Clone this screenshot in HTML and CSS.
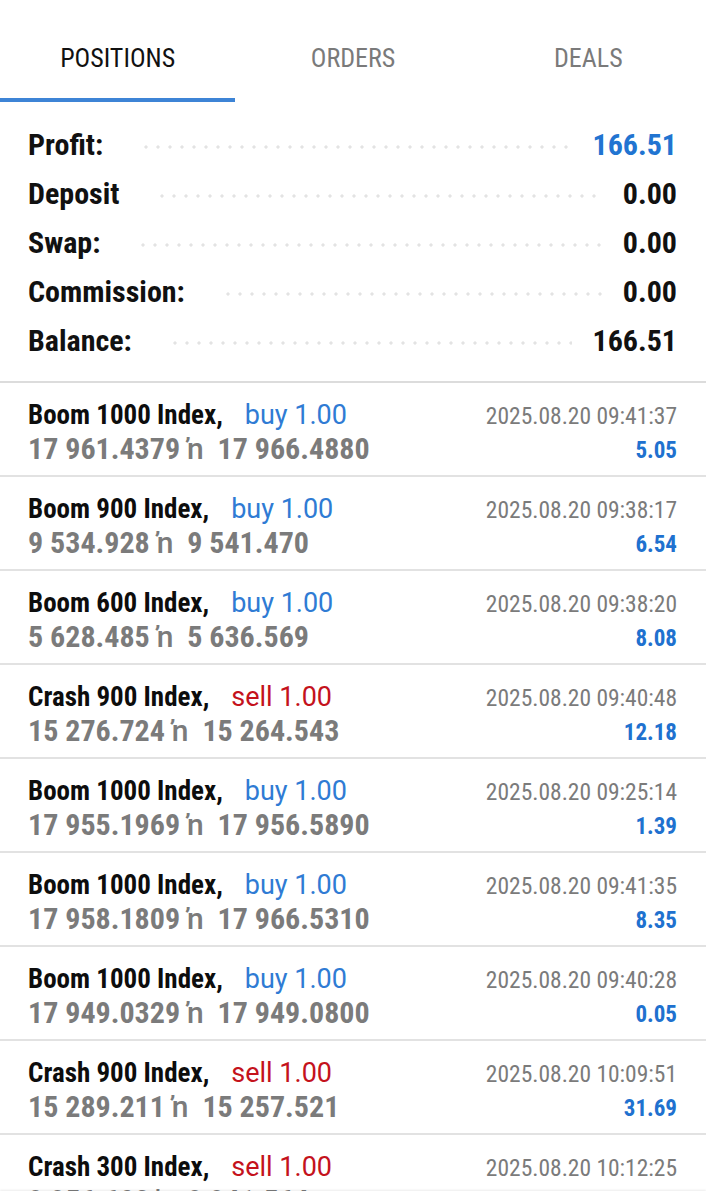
FILE: index.html
```html
<!DOCTYPE html>
<html lang="en">
<head>
<meta charset="utf-8">
<title>Trade</title>
<link rel="stylesheet" href="styles.css">
</head>
<body>
<div class="app">
  <nav class="tabs">
    <div class="tab active">POSITIONS</div>
    <div class="tab">ORDERS</div>
    <div class="tab">DEALS</div>
  </nav>

  <section class="summary">
    <div class="sum-row"><span class="label">Profit:</span><span class="dots"></span><span class="value blue">166.51</span></div>
    <div class="sum-row"><span class="label">Deposit</span><span class="dots"></span><span class="value">0.00</span></div>
    <div class="sum-row"><span class="label">Swap:</span><span class="dots"></span><span class="value">0.00</span></div>
    <div class="sum-row"><span class="label">Commission:</span><span class="dots"></span><span class="value">0.00</span></div>
    <div class="sum-row"><span class="label">Balance:</span><span class="dots"></span><span class="value">166.51</span></div>
  </section>

  <ul class="positions">
    <li class="pos">
      <div class="left"><div class="title">Boom 1000 Index,<span class="buy">buy 1.00</span></div><div class="prices">17 961.4379 <span class="arr">ŉ</span>&nbsp; 17 966.4880</div></div>
      <div class="right"><div class="time">2025.08.20 09:41:37</div><div class="pl">5.05</div></div>
    </li>
    <li class="pos">
      <div class="left"><div class="title">Boom 900 Index,<span class="buy">buy 1.00</span></div><div class="prices">9 534.928 <span class="arr">ŉ</span>&nbsp; 9 541.470</div></div>
      <div class="right"><div class="time">2025.08.20 09:38:17</div><div class="pl">6.54</div></div>
    </li>
    <li class="pos">
      <div class="left"><div class="title">Boom 600 Index,<span class="buy">buy 1.00</span></div><div class="prices">5 628.485 <span class="arr">ŉ</span>&nbsp; 5 636.569</div></div>
      <div class="right"><div class="time">2025.08.20 09:38:20</div><div class="pl">8.08</div></div>
    </li>
    <li class="pos">
      <div class="left"><div class="title">Crash 900 Index,<span class="sell">sell 1.00</span></div><div class="prices">15 276.724 <span class="arr">ŉ</span>&nbsp; 15 264.543</div></div>
      <div class="right"><div class="time">2025.08.20 09:40:48</div><div class="pl">12.18</div></div>
    </li>
    <li class="pos">
      <div class="left"><div class="title">Boom 1000 Index,<span class="buy">buy 1.00</span></div><div class="prices">17 955.1969 <span class="arr">ŉ</span>&nbsp; 17 956.5890</div></div>
      <div class="right"><div class="time">2025.08.20 09:25:14</div><div class="pl">1.39</div></div>
    </li>
    <li class="pos">
      <div class="left"><div class="title">Boom 1000 Index,<span class="buy">buy 1.00</span></div><div class="prices">17 958.1809 <span class="arr">ŉ</span>&nbsp; 17 966.5310</div></div>
      <div class="right"><div class="time">2025.08.20 09:41:35</div><div class="pl">8.35</div></div>
    </li>
    <li class="pos">
      <div class="left"><div class="title">Boom 1000 Index,<span class="buy">buy 1.00</span></div><div class="prices">17 949.0329 <span class="arr">ŉ</span>&nbsp; 17 949.0800</div></div>
      <div class="right"><div class="time">2025.08.20 09:40:28</div><div class="pl">0.05</div></div>
    </li>
    <li class="pos">
      <div class="left"><div class="title">Crash 900 Index,<span class="sell">sell 1.00</span></div><div class="prices">15 289.211 <span class="arr">ŉ</span>&nbsp; 15 257.521</div></div>
      <div class="right"><div class="time">2025.08.20 10:09:51</div><div class="pl">31.69</div></div>
    </li>
    <li class="pos">
      <div class="left"><div class="title">Crash 300 Index,<span class="sell">sell 1.00</span></div><div class="prices">9 956.602 <span class="arr">ŉ</span>&nbsp; 9 941.564</div></div>
      <div class="right"><div class="time">2025.08.20 10:12:25</div><div class="pl">15.04</div></div>
    </li>
  </ul>
  <div class="bottom-bar"></div>
</div>
</body>
</html>
```

FILE: styles.css
```css
* { box-sizing: border-box; }
html, body { margin: 0; padding: 0; background: #fff; }
body {
  font-family: "Roboto Condensed", Roboto, "Liberation Sans Narrow", sans-serif;
  color: #111;
  overflow: hidden;
}
.app { width: 706px; height: 1200px; overflow: hidden; position: relative; }

.tabs { display: grid; grid-template-columns: repeat(3, 1fr); height: 102px; }
.tab {
  display: flex; align-items: center; justify-content: center;
  padding-top: 18px;
  font-size: 26px; color: #7a7a7a;
  border-bottom: 4px solid transparent;
}
.tab.active { color: #111; border-bottom-color: #3d84d6; }

.summary { padding: 18px 29px 16px 28px; border-bottom: 2px solid #dcdcdc; }
.sum-row { display: flex; align-items: center; height: 49px; font-weight: 700; font-size: 30px; }
.label { flex: none; }
.dots {
  flex: 1; height: 4px; margin: 4px 20px 0 37px;
  background-image: radial-gradient(circle, #e3e3e3 1.4px, transparent 1.8px);
  background-size: 12px 4px; background-repeat: repeat-x; background-position: left center;
}
.value { flex: none; color: #111; }
.value.blue { color: #2174d1; }

.positions { list-style: none; margin: 0; padding: 0; }
.pos {
  display: flex; justify-content: space-between;
  padding: 16px 29px 10px 28px;
  border-bottom: 2px solid #e2e2e2;
  height: 94px;
}
.title { font-weight: 700; font-size: 27px; line-height: 33px; color: #0d0d0d; white-space: nowrap; }
.buy, .sell { font-family: Roboto, "Noto Sans", sans-serif; font-weight: 400; margin-left: 22px; }
.buy { color: #2f7bd4; }
.sell { color: #c4121c; }
.prices { font-weight: 700; font-size: 30px; line-height: 33px; color: #7b7b7b; white-space: nowrap; }
.arr { font-family: Roboto, "Noto Sans", sans-serif; font-weight: 500; }
.right { text-align: right; }
.time { font-size: 23.5px; line-height: 33px; color: #7b7b7b; padding-top: 1px; }
.pl { font-weight: 700; font-size: 23px; line-height: 33px; color: #2071cf; padding-top: 1px; }

.bottom-bar {
  position: absolute; left: 0; right: 0; bottom: 0; height: 9px;
  background: #fff; box-shadow: 0 -1px 2px rgba(0,0,0,0.08);
}
```
